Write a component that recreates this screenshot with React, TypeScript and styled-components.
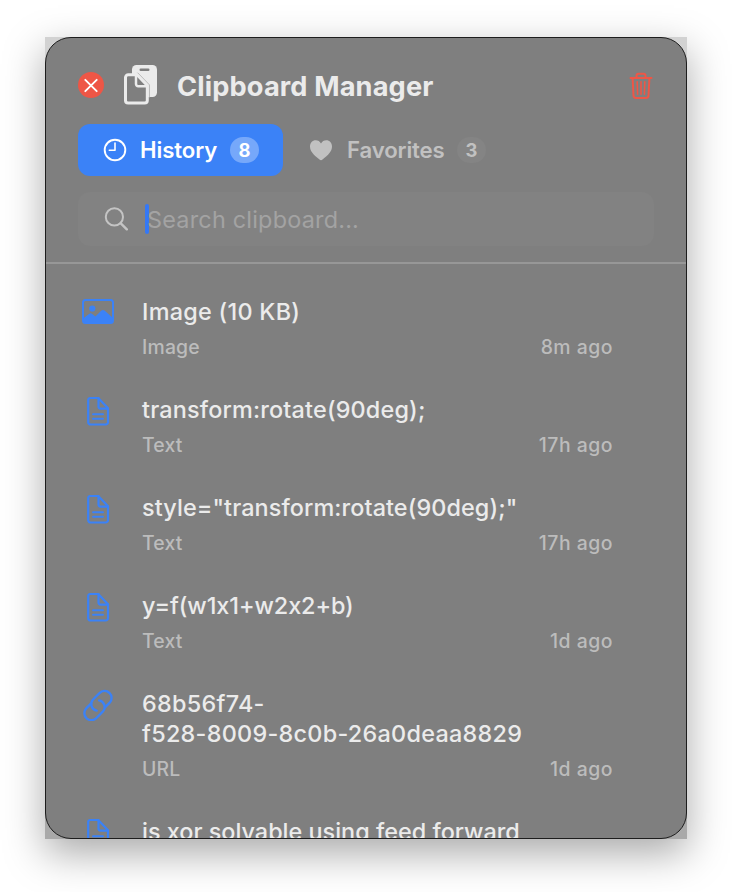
import React from "react";
import styled, { createGlobalStyle } from "styled-components";

const GlobalStyle = createGlobalStyle`
  html, body { margin: 0; background: #fff; }
  * { box-sizing: border-box; }
  body {
    font-family: Inter, "Noto Sans", sans-serif;
    font-feature-settings: "calt" 0;
    color: #ebebeb;
  }
`;

const Desktop = styled.div`
  width: 732px;
  height: 892px;
  padding: 37px 45px;
  overflow: hidden;
`;

const WindowShadow = styled.div`
  width: 642px;
  height: 802px;
  background: linear-gradient(#d2d2d2 0 50%, #a9a9a9 50% 100%);
  box-shadow: 0 14px 38px rgba(0, 0, 0, 0.34);
`;

const Panel = styled.main`
  height: 100%;
  display: flex;
  flex-direction: column;
  border: 1px solid #1d1d1d;
  border-radius: 26px;
  background: #7f7f7f;
  overflow: hidden;
`;

const Top = styled.header`
  flex: none;
  height: 226px;
  padding: 26px 32px 0;
  border-bottom: 2px solid #979797;
`;

const TitleBar = styled.div`
  display: flex;
  align-items: center;
  height: 42px;
`;

const CloseButton = styled.button`
  display: flex;
  align-items: center;
  justify-content: center;
  width: 26px;
  height: 26px;
  padding: 0;
  border: 0;
  border-radius: 50%;
  background: #ee5646;
`;

const AppIcon = styled.svg`
  margin-left: 19px;
  width: 36px;
  height: 42px;
`;

const Title = styled.h1`
  margin: 4px 0 0 18px;
  font-size: 27.2px;
  line-height: 34px;
  font-weight: 700;
  letter-spacing: 0.14px;
`;

const TrashButton = styled.button`
  margin: 2px 1px 0 auto;
  padding: 0;
  border: 0;
  background: none;
  color: #ee5646;
  display: flex;
`;

const Tabs = styled.nav`
  display: flex;
  margin-top: 18px;
`;

const Tab = styled.button<{ $active?: boolean }>`
  display: flex;
  align-items: center;
  width: ${(p) => (p.$active ? 205 : 227)}px;
  height: 52px;
  padding: 0 24px 0 25px;
  border: 0;
  border-radius: 12px;
  font: 600 22.2px Inter, sans-serif;
  letter-spacing: ${(p) => (p.$active ? "-0.1px" : "-0.15px")};
  color: ${(p) => (p.$active ? "#fff" : "#c1c1c1")};
  background: ${(p) => (p.$active ? "#3b82f7" : "transparent")};
`;

const TabLabel = styled.span`
  line-height: 28px;
`;

const TabIcon = styled.svg<{ $gap: number }>`
  flex: none;
  width: 24px;
  height: 24px;
  margin-right: ${(p) => p.$gap}px;
`;

const Badge = styled.span<{ $active?: boolean }>`
  margin-left: auto;
  display: flex;
  align-items: center;
  justify-content: center;
  flex: none;
  width: 29px;
  height: 26px;
  border-radius: 13px;
  font-size: 18.4px;
  font-weight: 700;
  letter-spacing: 0;
  background: ${(p) => (p.$active ? "#76a8fa" : "#848484")};
`;

const SearchField = styled.label`
  display: flex;
  align-items: center;
  height: 54px;
  margin-top: 16px;
  padding: 0 26px;
  border-radius: 12px;
  background: #828282;
`;

const Caret = styled.span`
  flex: none;
  width: 4px;
  height: 30px;
  margin-left: 17px;
  border-radius: 2px;
  background: #3478f6;
`;

const Placeholder = styled.span`
  margin: 1px 0 0 -2px;
  font-size: 23.4px;
  line-height: 30px;
  letter-spacing: 0.22px;
  color: #a3a3a3;
`;

const List = styled.ul`
  flex: none;
  display: flex;
  flex-direction: column;
  gap: 36px;
  margin: 0;
  padding: 33px 73px 0 32px;
  list-style: none;
`;

const Item = styled.li`
  display: grid;
  grid-template-columns: 40px 1fr;
  column-gap: 24px;
`;

const IconCell = styled.span`
  display: flex;
  justify-content: center;
  height: 30px;
  color: #3b82f7;
`;

const ItemText = styled.div<{ $track: number }>`
  white-space: pre-line;
  font-size: 23.4px;
  line-height: 30px;
  font-weight: 500;
  letter-spacing: ${(p) => p.$track}px;
`;

const Meta = styled.div`
  display: flex;
  justify-content: space-between;
  margin-top: 8px;
  font-size: 19.4px;
  line-height: 24px;
  font-weight: 500;
  letter-spacing: 0.2px;
  color: #bcbcbc;
`;

const Age = styled.span`
  letter-spacing: 0.5px;
`;

type Kind = "Image" | "Text" | "URL";

const stroke = {
  fill: "none",
  stroke: "currentColor",
  strokeWidth: 2,
  strokeLinecap: "round" as const,
  strokeLinejoin: "round" as const,
};

function KindIcon({ kind }: { kind: Kind }) {
  if (kind === "Image") {
    return (
      <svg width="34" height="30" viewBox="0 0 34 30" {...stroke}>
        <rect x="2" y="3" width="30" height="23" rx="2.5" />
        <circle cx="11.3" cy="11.5" r="3.1" fill="currentColor" stroke="none" />
        <path
          d="M2 21.500 8.400 16.700c.8-.7 1.700-.7 2.500 0l3.500 2.900 6.100-6c1-.9 2-.9 3 0L32 21v3a2 2 0 0 1-2 2H4a2 2 0 0 1-2-2z"
          fill="currentColor"
          stroke="none"
        />
      </svg>
    );
  }
  if (kind === "Text") {
    return (
      <svg width="24" height="32" viewBox="0 0 24 32" {...stroke} strokeWidth={2.2}>
        <path d="M4.200 3h8L22 13.300v13.900a2.300 2.300 0 0 1-2.300 2.300h-15a2.300 2.300 0 0 1-2.500-2.300V5a2 2 0 0 1 2-2z" />
        <path d="M12.500 3v8.600a2 2 0 0 0 2 2H22" />
        <path d="M7 19.200h10M7 23.700h10" strokeWidth="1.900" />
      </svg>
    );
  }
  return (
    <svg width="32" height="32" viewBox="0.6 0.8 30.400 30.400" {...stroke} strokeWidth={2.2}>
      <path d="M14.600 21.300a6.300 6.300 0 0 1-3.700-10.300l6.300-6.300a6.500 6.500 0 0 1 9.700 9.100l-4.700 4.700" />
      <path d="M16.900 11.700a6.300 6.300 0 0 1 3.700 10.300l-6.300 6.300a6.500 6.500 0 0 1-9.700-9.100l4.700-4.700" />
    </svg>
  );
}

const items: { kind: Kind; text: string; age?: string; track: number }[] = [
  { kind: "Image", text: "Image (10 KB)", age: "8m ago", track: 0.28 },
  { kind: "Text", text: "transform:rotate(90deg);", age: "17h ago", track: 0.18 },
  { kind: "Text", text: 'style="transform:rotate(90deg);"', age: "17h ago", track: 0.1 },
  { kind: "Text", text: "y=f(w1x1+w2x2+b)", age: "1d ago", track: -0.07 },
  { kind: "URL", text: "68b56f74-\nf528-8009-8c0b-26a0deaa8829", age: "1d ago", track: 0.28 },
  { kind: "Text", text: "is xor solvable using feed forward", track: 0.01 },
];

export default function App() {
  return (
    <Desktop>
      <GlobalStyle />
      <WindowShadow>
        <Panel>
          <Top>
            <TitleBar>
              <CloseButton aria-label="Close">
                <svg width="16" height="16" viewBox="0 0 16 16" stroke="#fff" strokeWidth="1.900" strokeLinecap="round">
                  <path d="m2.300 2.800 11.400 11.400m0-11.400-11.400 11.400" />
                </svg>
              </CloseButton>
              <AppIcon viewBox="0 0 36 42">
                <rect x="9" y="1" width="25" height="32" rx="4.500" fill="#ebebeb" />
                <rect x="16.500" y="4.600" width="10" height="2.400" rx="1.200" fill="#7f7f7f" />
                <path d="M14.500 8.700 26.300 20.800V33.500" fill="none" stroke="#b0b0b0" strokeWidth="1" />
                <path
                  d="M5.300 10.700h8.700L24.300 21.500v15a2.600 2.600 0 0 1-2.600 2.600H5.100a2.600 2.600 0 0 1-2.600-2.600V13.500a2.800 2.800 0 0 1 2.800-2.800z"
                  fill="#7f7f7f"
                  stroke="#ebebeb"
                  strokeWidth="3"
                  strokeLinejoin="round"
                />
                <path d="M13 11v9a2.200 2.200 0 0 0 2.200 2.200H24" fill="none" stroke="#ebebeb" strokeWidth="2.500" />
              </AppIcon>
              <Title>Clipboard Manager</Title>
              <TrashButton aria-label="Clear">
                <svg width="24" height="28" viewBox="0 0 24 28" {...stroke} strokeWidth="2">
                  <path d="M1.500 6h21M7.500 6V3.700c0-1.300.7-2 2-2h5c1.300 0 2 .7 2 2V6" />
                  <path d="m3.600 6 .9 17.500a2.500 2.500 0 0 0 2.500 2.400h10a2.500 2.500 0 0 0 2.500-2.400L20.400 6" />
                  <path d="m8.200 9.700.4 12.600M12 9.700v12.600m3.800-12.600-.4 12.600" strokeWidth="1.600" />
                </svg>
              </TrashButton>
            </TitleBar>
            <Tabs>
              <Tab $active>
                <TabIcon $gap={13} viewBox="0 0 24 24" {...stroke} strokeWidth="1.900">
                  <circle cx="12" cy="12" r="10.300" />
                  <path d="M12 5v7.200H6.300" strokeWidth="1.600" />
                </TabIcon>
                <TabLabel>History</TabLabel>
                <Badge $active>8</Badge>
              </Tab>
              <Tab>
                <TabIcon $gap={15} viewBox="-1 0 24 24" fill="currentColor">
                  <path d="M12 22.200c-.5 0-1-.4-1.500-.8C4.700 17.300 1 13.300 1 8.600 1 4.900 3.400 2.300 6.700 2.300c2.300 0 4.200 1.200 5.300 3.300 1.100-2.100 3-3.300 5.300-3.300C20.600 2.300 23 4.900 23 8.600c0 4.700-3.700 8.700-9.500 12.800-.5.4-1 .8-1.500.8z" />
                </TabIcon>
                <TabLabel>Favorites</TabLabel>
                <Badge>3</Badge>
              </Tab>
            </Tabs>
            <SearchField>
              <svg width="24" height="24" viewBox="-0.500 0 24 24" stroke="#c4c4c4" fill="none" strokeLinecap="round">
                <circle cx="9.900" cy="9.900" r="8.600" strokeWidth="2" />
                <path d="m16.300 16.300 6 6" strokeWidth="2.400" />
              </svg>
              <Caret />
              <Placeholder>Search clipboard...</Placeholder>
            </SearchField>
          </Top>
          <List>
            {items.map((item, index) => (
              <Item key={index}>
                <IconCell>
                  <KindIcon kind={item.kind} />
                </IconCell>
                <div>
                  <ItemText $track={item.track}>{item.text}</ItemText>
                  {item.age && (
                    <Meta>
                      <span>{item.kind}</span>
                      <Age>{item.age}</Age>
                    </Meta>
                  )}
                </div>
              </Item>
            ))}
          </List>
        </Panel>
      </WindowShadow>
    </Desktop>
  );
}
